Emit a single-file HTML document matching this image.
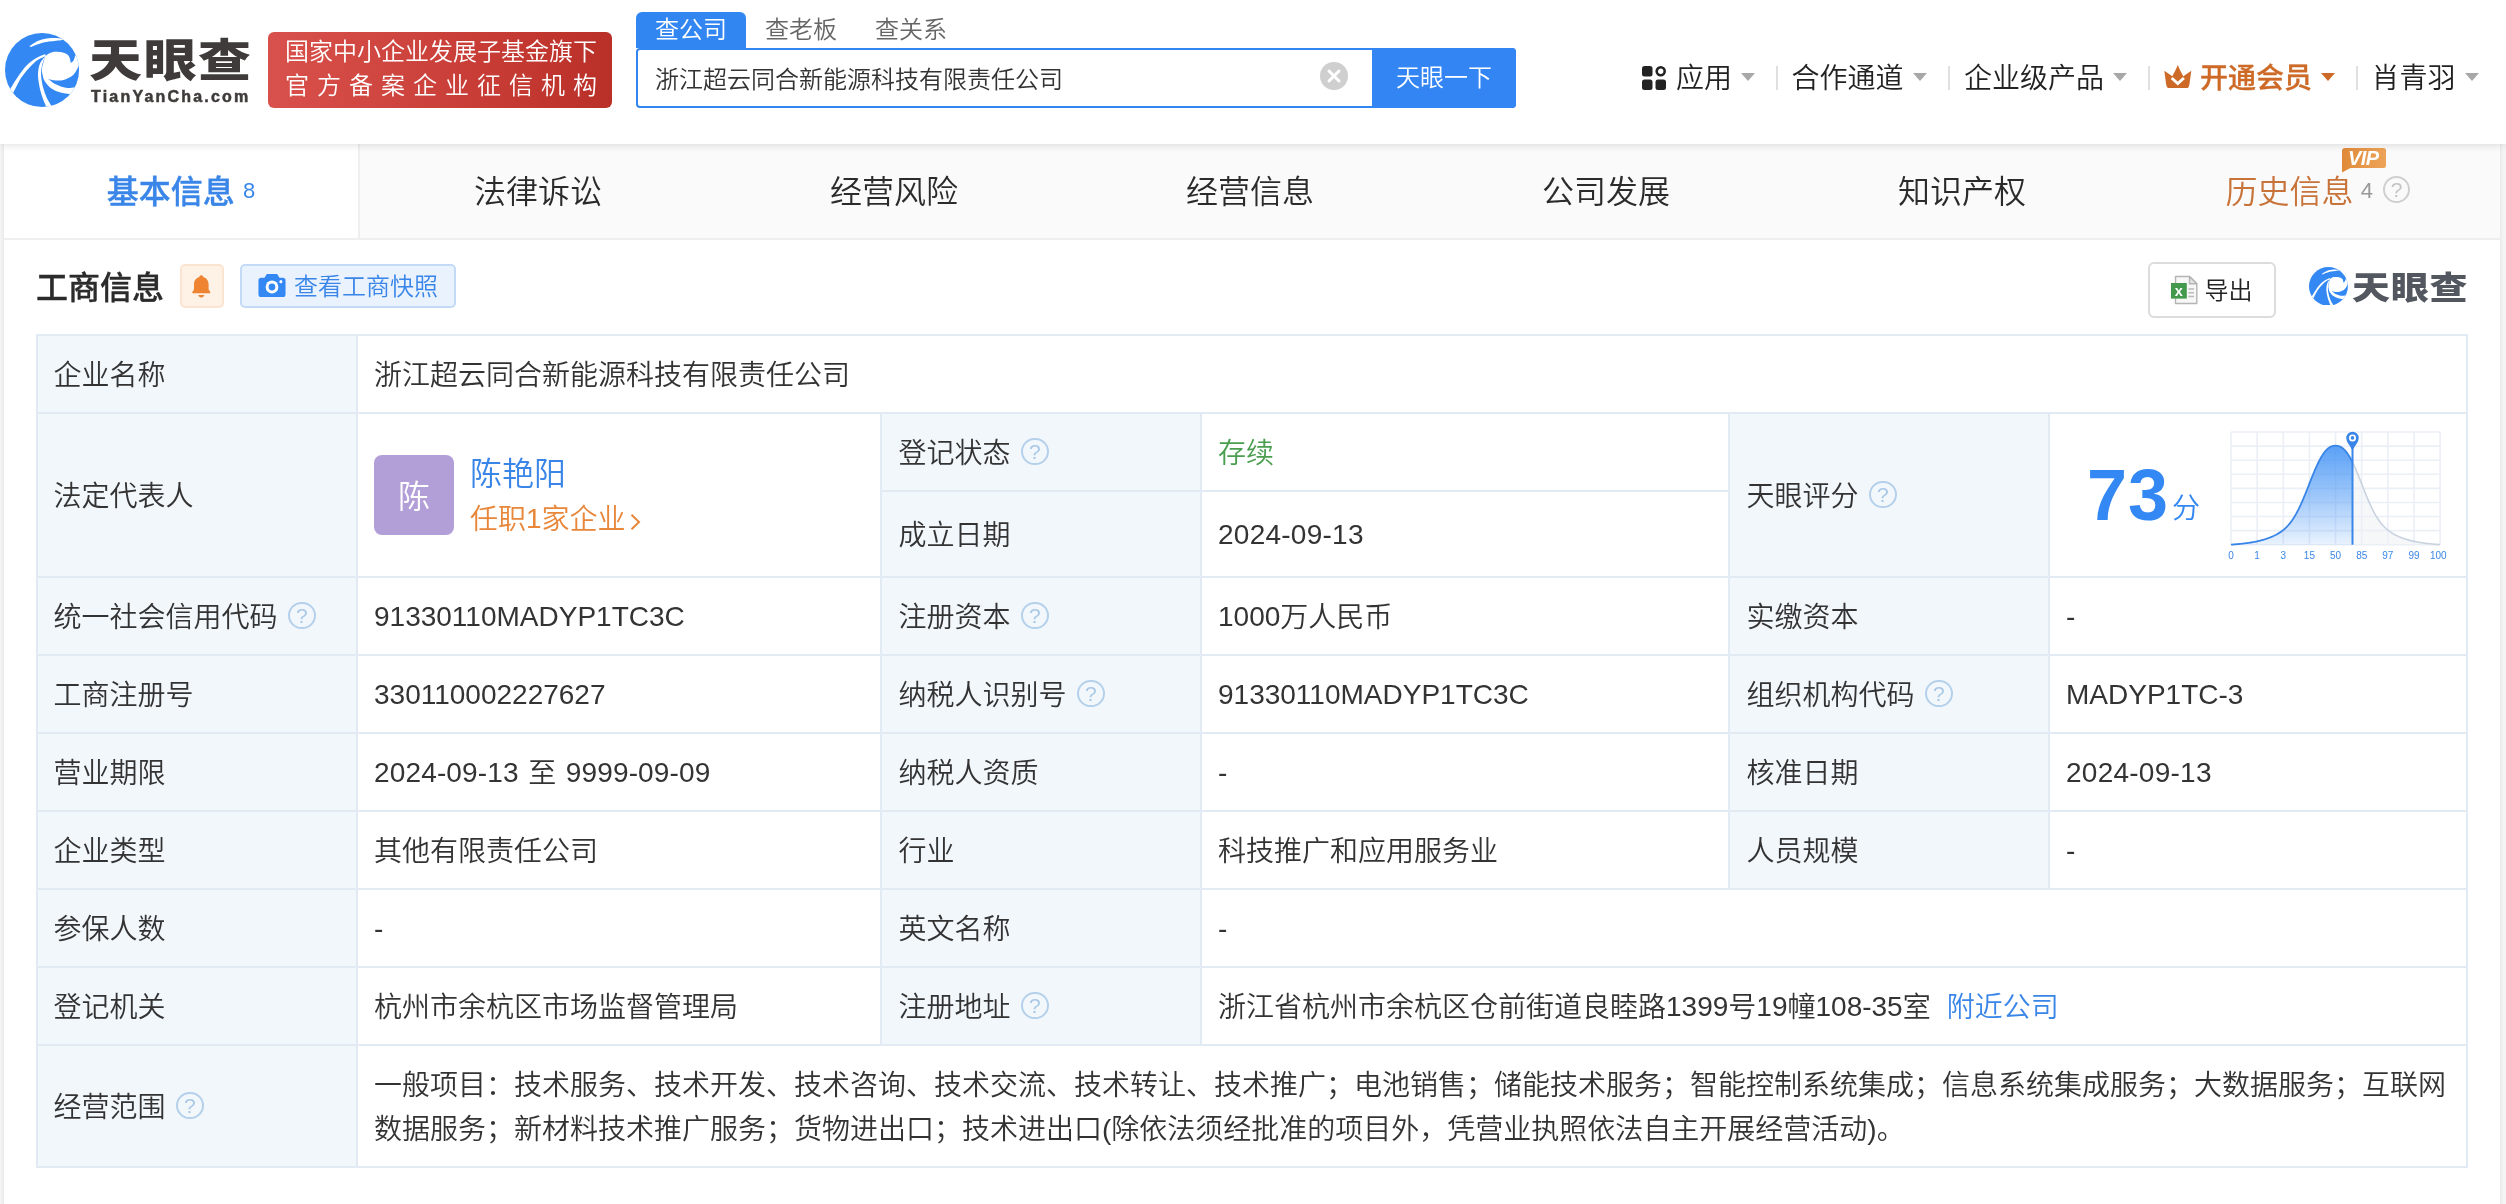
<!DOCTYPE html>
<html lang="zh-CN">
<head>
<meta charset="utf-8">
<title>天眼查 - 浙江超云同合新能源科技有限责任公司</title>
<style>
*{box-sizing:border-box;margin:0;padding:0}
html,body{width:2506px;height:1204px;overflow:hidden;background:#f5f5f5}
body{position:relative;font-family:"Liberation Sans","Noto Sans CJK SC",sans-serif;color:#333;font-size:28px;font-weight:350}
.abs{position:absolute}
#hdr,#main{will-change:transform}
/* header */
#hdr{position:absolute;left:0;top:0;width:2506px;height:144px;background:#fff;box-shadow:0 1px 8px rgba(0,0,0,.13);z-index:5}
#logo-txt{position:absolute;left:89px;top:20px;font-size:53px;line-height:72px;font-weight:900;color:#3f3b3a;letter-spacing:1.5px;white-space:nowrap;transform-origin:0 100%;transform:scaleY(.86)}
#logo-sub{position:absolute;left:91px;top:87px;font-size:16px;line-height:20px;font-weight:700;color:#3f3b3a;letter-spacing:2.2px;white-space:nowrap;-webkit-text-stroke:.5px #3f3b3a}
#banner{position:absolute;left:268px;top:32px;width:344px;height:76px;border-radius:6px;background:linear-gradient(90deg,#d9514c 0%,#c53a33 70%,#b93029 100%);color:#fff;font-size:24px;line-height:34px;padding:3px 0 0 17px;white-space:nowrap}
#banner .l2{letter-spacing:8px}
.stab{position:absolute;top:12px;height:36px;line-height:36px;font-size:24px;color:#666;white-space:nowrap}
#stab1{left:636px;width:110px;background:#3186f2;color:#fff;text-align:center;border-radius:6px 6px 0 0}
#sbox{position:absolute;left:636px;top:48px;width:880px;height:60px;border:2px solid #3186f2;border-radius:4px;background:#fff}
#sbox .q{position:absolute;left:17px;top:0;line-height:59px;font-size:24px;color:#333;white-space:nowrap}
#sbtn{position:absolute;left:1372px;top:48px;width:144px;height:60px;background:#3285f3;color:#fff;font-size:24px;line-height:59px;text-align:center;border-radius:0 4px 4px 0}
#sclr{position:absolute;left:1320px;top:62px;width:28px;height:28px}
.nav{position:absolute;top:59px;line-height:40px;font-size:28px;color:#222;white-space:nowrap}
.nav.vip{color:#cd6a27;font-weight:500;-webkit-text-stroke:.3px #cd6a27}
.tri{position:absolute;top:72.5px;width:0;height:0;border-left:7px solid transparent;border-right:7px solid transparent;border-top:8.5px solid #a8a8a8}
.tri.o{border-top-color:#cd6a27}
.sep{position:absolute;top:66px;width:2px;height:24px;background:#e0e0e3}
/* tabs */
#main{position:absolute;left:4px;top:144px;width:2496px;height:1064px;background:#fff;box-shadow:0 0 4px rgba(0,0,0,.10)}
#tabs{position:absolute;left:0;top:0;width:2496px;height:96px;background:#fafafa;border-bottom:2px solid #efefef}
.tab{position:absolute;top:0;height:94px;line-height:96px;font-size:32px;color:#2b2b2b;text-align:center;width:356px;white-space:nowrap}
.tab.on{background:#fff;color:#3a86e8;font-weight:500;-webkit-text-stroke:.35px #3a86e8;border-right:2px solid #efefef;width:356px}
.tab .n{font-size:22px;font-weight:400;margin-left:8px;position:relative;top:-5px;-webkit-text-stroke:0}

/* body */
#pg{position:absolute;left:-4px;top:-144px;width:2506px;height:1204px}
#pg>*{position:absolute}
#sec-title{left:36px;top:265.5px;line-height:44px;font-size:32px;font-weight:500;color:#2b2b2b;-webkit-text-stroke:.35px #2b2b2b;white-space:nowrap}
#bell{left:180px;top:264px;width:44px;height:44px;border:2px solid #fbe4d0;background:#fef1e6;border-radius:5px}
#bell svg{position:absolute;left:9px;top:7.5px}
#snap{left:240px;top:264px;width:216px;height:44px;border:2px solid #c4dbf8;background:#eaf2fd;border-radius:5px;color:#3a86e8;font-size:24px;line-height:39px;white-space:nowrap}
#snap svg{position:absolute;left:16px;top:6.5px}
#snap span{position:absolute;left:52px;top:1px}
#export{left:2148px;top:262px;width:128px;height:56px;border:2px solid #dcdcdc;border-radius:6px;background:#fff;color:#222;font-size:24px;line-height:51px;white-space:nowrap}
#export svg{position:absolute;left:20px;top:11px}
#export span{position:absolute;left:54.5px;top:1px}
#wm-txt{left:2352px;top:264px;letter-spacing:.7px;font-size:38px;line-height:48px;font-weight:900;color:#53575f;white-space:nowrap;transform-origin:0 50%;transform:scaleY(.84)}
.c{border:2px solid #e2eaf4;background:#fff;display:flex;align-items:center;padding:3.5px 14px 0 16px;font-weight:350;font-size:28px;line-height:44px;color:#333;white-space:nowrap}
.c.l{background:#f2f7fc;padding-left:15.5px;color:#333}
.c .t{display:flex;align-items:center}
.qm{display:inline-block;width:27.5px;height:27.5px;border:2px solid #b4d0ea;border-radius:50%;color:#a9c8e6;font-size:21px;line-height:24px;text-align:center;margin-left:10.5px;position:relative;top:-2.5px;font-weight:400;font-family:"Liberation Sans",sans-serif}
.lk{color:#3a86e8;margin-left:16px}
.c.scope{white-space:normal;align-items:flex-start;padding-top:17.5px;padding-right:10px;line-height:44.5px}
.c.scope .t{display:block}

.ava{position:absolute;left:16px;top:41px;width:80px;height:80px;border-radius:8px;background:#b39fd8;color:#fff;font-size:32px;line-height:84px;text-align:center}
.pn{position:absolute;left:112px;top:38px;font-size:32px;line-height:44px;color:#3a86e8}
.pj{position:absolute;left:112px;top:84px;font-size:28px;line-height:44px;color:#e8873a}
.pj svg{margin-left:4.5px;position:relative;top:2px}
.sc{position:absolute;left:37px;top:39px;font-size:72px;line-height:84px;font-weight:700;color:#3388f3;letter-spacing:1px}
.fen{position:absolute;left:122px;top:73px;font-size:28px;line-height:44px;color:#3388f3}

.qm.g{border-color:#cfcfcf;color:#c4c4c4;margin-left:10px;position:relative;top:-6.2px;font-size:21px;line-height:24px;font-weight:400}
.vipb{position:absolute;left:202px;top:3.8px;width:44px;height:25px}
.vipb svg{position:absolute;left:0;top:0}
.vipb b{position:absolute;left:6px;top:.5px;font-size:20px;line-height:20px;color:#fff;font-style:italic;font-weight:700;letter-spacing:-.6px;font-family:"Liberation Sans",sans-serif}
.c.l2{padding-left:16.5px}
.en{position:relative;top:-.6px}
</style>
</head>
<body>
<div id="hdr">
  <svg class="abs" style="left:5px;top:33px" width="74" height="74" viewBox="0 0 74 74"><defs><clipPath id="lc1"><circle cx="37" cy="37" r="37"/></clipPath></defs><circle cx="37" cy="37" r="37" fill="#3388f3"/><g clip-path="url(#lc1)"><path d="M40.3 23.0 C41.4 22.3 44.3 19.7 47.2 19.2 C50.0 18.6 54.8 18.9 57.5 19.5 C60.3 20.1 62.4 21.2 63.8 23.0 C65.1 24.7 65.5 28.7 65.8 29.9 C66.3 29.4 68.0 28.5 68.7 27.2 C69.5 26.0 69.9 23.4 70.1 22.6 L75.5 21.6 L75.5 61.7 L64.1 61.0 C62.7 60.8 58.4 60.5 55.5 59.6 C52.5 58.7 49.1 57.4 46.5 55.5 C43.8 53.5 41.2 50.7 39.6 47.9 C37.9 45.0 37.3 39.8 36.8 38.2 L37.1 34.0 Z" fill="#fff"/><path d="M74.1 32.3 C73.1 34.0 70.7 39.8 67.9 42.3 C65.1 44.8 60.9 46.4 57.5 47.2 C54.2 48.0 50.3 47.4 47.9 47.2 C45.4 46.9 43.8 46.0 43.0 45.8 C44.3 46.7 47.6 49.8 50.6 51.3 C53.6 52.8 57.9 54.3 61.0 54.8 C64.1 55.3 67.6 54.5 69.0 54.4 L75.5 54.8 L75.5 32.6 Z" fill="#3388f3"/><path d="M4.1 57.9 C5.6 55.6 9.7 48.5 12.6 44.3 C15.5 40.1 18.5 35.8 21.6 32.6 C24.7 29.4 28.1 27.0 31.3 25.0 C34.4 23.1 38.8 21.7 40.3 21.0 L40.6 23.3 C39.3 23.9 35.4 25.2 32.6 27.1 C29.9 29.0 27.1 31.7 24.3 34.7 C21.6 37.7 18.7 40.9 16.0 45.1 C13.4 49.2 9.7 57.2 8.4 59.6 L5.7 61.7 Z" fill="#fff"/><path d="M40.4 23.1 C39.4 24.5 36.0 28.1 34.7 31.3 C33.5 34.5 33.0 38.4 33.0 42.3 C33.0 46.2 34.0 51.1 34.7 54.8 C35.5 58.5 36.4 61.4 37.5 64.5 C38.5 67.5 40.4 71.7 40.9 73.1 L43.7 75.5 L46.3 72.6 C45.6 71.3 43.0 67.4 41.6 64.5 C40.3 61.5 39.1 58.2 38.2 54.8 C37.3 51.3 36.5 47.2 36.2 43.7 C36.0 40.3 36.0 37.5 36.7 34.0 C37.3 30.6 39.8 24.9 40.4 23.1 Z" fill="#fff"/><path d="M24.3 13.1 C26.0 12.2 30.3 8.8 34.0 7.4 C37.7 6.0 42.6 5.3 46.5 5.0 C50.4 4.7 55.7 5.4 57.5 5.5 L57.9 6.9 C56.0 7.1 50.0 7.8 46.5 8.3 C43.0 8.8 40.3 9.0 36.8 10.0 C33.3 10.9 27.6 13.4 25.7 14.1 Z" fill="#fff"/></g></svg>
  <div id="logo-txt">天眼查</div>
  <div id="logo-sub">TianYanCha.com</div>
  <div id="banner"><div>国家中小企业发展子基金旗下</div><div class="l2">官方备案企业征信机构</div></div>

  <div class="stab" id="stab1">查公司</div>
  <div class="stab" style="left:765px">查老板</div>
  <div class="stab" style="left:875px">查关系</div>
  <div id="sbox"><div class="q">浙江超云同合新能源科技有限责任公司</div></div>
  <svg id="sclr" viewBox="0 0 28 28"><circle cx="14" cy="14" r="14" fill="#cfcfcf"/><path d="M9 9 L19 19 M19 9 L9 19" stroke="#fff" stroke-width="3" stroke-linecap="round"/></svg>
  <div id="sbtn">天眼一下</div>

  <svg class="abs" style="left:1642px;top:66px" width="24" height="24" viewBox="0 0 24 24"><rect x="0" y="0" width="10.5" height="10.5" rx="2.5" fill="#222"/><rect x="0" y="13.5" width="10.5" height="10.5" rx="2.5" fill="#222"/><rect x="13.5" y="13.5" width="10.5" height="10.5" rx="2.5" fill="#222"/><circle cx="18.7" cy="5.3" r="4" fill="none" stroke="#222" stroke-width="2.6"/></svg>
  <div class="nav" style="left:1676px">应用</div><div class="tri" style="left:1741px"></div><div class="sep" style="left:1776px"></div>
  <div class="nav" style="left:1791.5px">合作通道</div><div class="tri" style="left:1913px"></div><div class="sep" style="left:1948px"></div>
  <div class="nav" style="left:1964px">企业级产品</div><div class="tri" style="left:2113px"></div><div class="sep" style="left:2148px"></div>
  <svg class="abs" style="left:2164.2px;top:64.6px" width="27.600" height="23.600" viewBox="0 0 27.600 23.600"><path d="M0.300 5.700 L8.300 11.200 C10.200 8 12.400 3.500 13.800 0 C15.200 3.500 17.400 8 19.300 11.200 L27.300 5.700 L25.400 19.600 Q24.900 23.600 21.200 23.600 L6.400 23.600 Q2.700 23.600 2.200 19.600 Z" fill="#cd6a27"/><path d="M7.700 13 L13.800 18.500 L19.900 13" fill="none" stroke="#fff" stroke-width="2.900" stroke-linejoin="miter"/></svg>
  <div class="nav vip" style="left:2200px">开通会员</div><div class="tri o" style="left:2321px"></div><div class="sep" style="left:2356px"></div>
  <div class="nav" style="left:2371.5px">肖青羽</div><div class="tri" style="left:2465px"></div>
</div>

<div id="main">
  <div id="tabs">
    <div class="tab on" style="left:0">基本信息<span class="n">8</span></div>
    <div class="tab" style="left:356px">法律诉讼</div>
    <div class="tab" style="left:712px">经营风险</div>
    <div class="tab" style="left:1068px">经营信息</div>
    <div class="tab" style="left:1424px">公司发展</div>
    <div class="tab" style="left:1780px">知识产权</div>
    <div class="tab" id="tab-his" style="left:2136px;color:#c8733a">历史信息<span class="n" style="color:#999;margin-left:7px">4</span><span class="qm g">?</span><span class="vipb"><svg width="44" height="25" viewBox="0 0 44 25"><defs><linearGradient id="vg" x1="0" y1="0" x2="1" y2="0"><stop offset="0" stop-color="#e08a3a"/><stop offset="1" stop-color="#eda458"/></linearGradient></defs><path d="M3 0 H41.500 Q44 0 44 2.500 V17.500 Q44 20 41.500 20 H8.500 L0 24.500 V3 Q0 0 3 0 Z" fill="url(#vg)"/></svg><b>VIP</b></span></div>
  </div>
  <div id="pg">
    <div id="sec-title">工商信息</div>
    <div id="bell"><svg width="20.6" height="24" viewBox="0 0 24 28"><path d="M12 1.500 C13.300 1.500 14.200 2.400 14.200 3.600 C18.200 4.600 20.500 8 20.500 12 L20.500 18 L22.500 21 Q23 22.500 21.500 22.500 L2.500 22.500 Q1 22.500 1.500 21 L3.500 18 L3.500 12 C3.500 8 5.800 4.600 9.800 3.600 C9.800 2.400 10.700 1.500 12 1.500 Z" fill="#ee8432"/><path d="M8.500 24.500 L15.500 24.500 C15.200 26.300 13.800 27.300 12 27.300 C10.200 27.300 8.800 26.300 8.500 24.500 Z" fill="#ee8432"/></svg></div>
    <div id="snap"><svg width="28" height="25" viewBox="0 0 30 26" preserveAspectRatio="none"><path d="M9.500 1 L20.500 1 L23 5 L26.500 5 Q29.500 5 29.500 8 L29.500 22 Q29.500 25 26.500 25 L3.500 25 Q0.500 25 0.500 22 L0.500 8 Q0.500 5 3.500 5 L7 5 Z" fill="#3388f3"/><circle cx="15" cy="14.500" r="6.800" fill="#fff"/><circle cx="15" cy="14.500" r="3.600" fill="#3388f3"/><circle cx="24.500" cy="9" r="1.600" fill="#fff"/></svg><span>查看工商快照</span></div>
    <div id="export"><svg width="28" height="30" viewBox="0 0 28 30"><path d="M5.500 1.500 L19.500 1.500 L26.800 8.800 L26.800 28.500 L5.500 28.500 Z" fill="#f7f7f7" stroke="#b4b4b4" stroke-width="1.400" stroke-linejoin="round"/><path d="M19.500 1.500 L19.500 8.800 L26.800 8.800 Z" fill="#e2e2e2" stroke="#b4b4b4" stroke-width="1.400" stroke-linejoin="round"/><path d="M18.500 14 H24 M18.500 17.700 H24 M18.500 21.400 H24" stroke="#b9b9b9" stroke-width="1.500"/><rect x="1" y="8" width="15.800" height="15.600" fill="#439a4c"/><text x="8.900" y="20.800" text-anchor="middle" font-family="Liberation Sans,sans-serif" font-weight="700" font-size="14.500" fill="#fff">x</text></svg><span>导出</span></div>
    <svg class="abs" style="left:2308.9px;top:266.7px" width="38.8" height="38.8" viewBox="0 0 74 74"><defs><clipPath id="lc2"><circle cx="37" cy="37" r="37"/></clipPath></defs><circle cx="37" cy="37" r="37" fill="#3388f3"/><g clip-path="url(#lc2)"><path d="M40.3 23.0 C41.4 22.3 44.3 19.7 47.2 19.2 C50.0 18.6 54.8 18.9 57.5 19.5 C60.3 20.1 62.4 21.2 63.8 23.0 C65.1 24.7 65.5 28.7 65.8 29.9 C66.3 29.4 68.0 28.5 68.7 27.2 C69.5 26.0 69.9 23.4 70.1 22.6 L75.5 21.6 L75.5 61.7 L64.1 61.0 C62.7 60.8 58.4 60.5 55.5 59.6 C52.5 58.7 49.1 57.4 46.5 55.5 C43.8 53.5 41.2 50.7 39.6 47.9 C37.9 45.0 37.3 39.8 36.8 38.2 L37.1 34.0 Z" fill="#fff"/><path d="M74.1 32.3 C73.1 34.0 70.7 39.8 67.9 42.3 C65.1 44.8 60.9 46.4 57.5 47.2 C54.2 48.0 50.3 47.4 47.9 47.2 C45.4 46.9 43.8 46.0 43.0 45.8 C44.3 46.7 47.6 49.8 50.6 51.3 C53.6 52.8 57.9 54.3 61.0 54.8 C64.1 55.3 67.6 54.5 69.0 54.4 L75.5 54.8 L75.5 32.6 Z" fill="#3388f3"/><path d="M4.1 57.9 C5.6 55.6 9.7 48.5 12.6 44.3 C15.5 40.1 18.5 35.8 21.6 32.6 C24.7 29.4 28.1 27.0 31.3 25.0 C34.4 23.1 38.8 21.7 40.3 21.0 L40.6 23.3 C39.3 23.9 35.4 25.2 32.6 27.1 C29.9 29.0 27.1 31.7 24.3 34.7 C21.6 37.7 18.7 40.9 16.0 45.1 C13.4 49.2 9.7 57.2 8.4 59.6 L5.7 61.7 Z" fill="#fff"/><path d="M40.4 23.1 C39.4 24.5 36.0 28.1 34.7 31.3 C33.5 34.5 33.0 38.4 33.0 42.3 C33.0 46.2 34.0 51.1 34.7 54.8 C35.5 58.5 36.4 61.4 37.5 64.5 C38.5 67.5 40.4 71.7 40.9 73.1 L43.7 75.5 L46.3 72.6 C45.6 71.3 43.0 67.4 41.6 64.5 C40.3 61.5 39.1 58.2 38.2 54.8 C37.3 51.3 36.5 47.2 36.2 43.7 C36.0 40.3 36.0 37.5 36.7 34.0 C37.3 30.6 39.8 24.9 40.4 23.1 Z" fill="#fff"/><path d="M24.3 13.1 C26.0 12.2 30.3 8.8 34.0 7.4 C37.7 6.0 42.6 5.3 46.5 5.0 C50.4 4.7 55.7 5.4 57.5 5.5 L57.9 6.9 C56.0 7.1 50.0 7.8 46.5 8.3 C43.0 8.8 40.3 9.0 36.8 10.0 C33.3 10.9 27.6 13.4 25.7 14.1 Z" fill="#fff"/></g></svg>
    <div id="wm-txt">天眼查</div>
<div class="c l" style="left:36px;top:334px;width:322px;height:80px;"><div class="t">企业名称</div></div>
<div class="c v" style="left:356px;top:334px;width:2112px;height:80px;"><div class="t">浙江超云同合新能源科技有限责任公司</div></div>
<div class="c l" style="left:36px;top:412px;width:322px;height:166px;"><div class="t">法定代表人</div></div>
<div class="c v" style="left:356px;top:412px;width:526px;height:166px;position:absolute"><div class="ava">陈</div><div class="pn">陈艳阳</div><div class="pj">任职<span class="en">1</span>家企业<svg width="11" height="18" viewBox="0 0 11 18"><path d="M1.500 1.800 L9 9 L1.500 16.200" fill="none" stroke="#e8873a" stroke-width="2"/></svg></div></div>
<div class="c l l2" style="left:880px;top:412px;width:322px;height:80px;"><div class="t">登记状态<span class="qm">?</span></div></div>
<div class="c v" style="left:1200px;top:412px;width:530px;height:80px;"><div class="t"><span style="color:#4b9e4f">存续</span></div></div>
<div class="c l l2" style="left:880px;top:490px;width:322px;height:88px;"><div class="t">成立日期</div></div>
<div class="c v" style="left:1200px;top:490px;width:530px;height:88px;"><div class="t"><span class="en" style="letter-spacing:.25px">2024-09-13</span></div></div>
<div class="c l l2" style="left:1728px;top:412px;width:322px;height:166px;"><div class="t">天眼评分<span class="qm">?</span></div></div>
<div class="c v" style="left:2048px;top:412px;width:420px;height:166px;"><div class="sc">73</div><div class="fen">分</div><svg class="chart" style="position:absolute;left:166.5px;top:3.5px" width="237.1" height="154.7" viewBox="-14 -14 237.1 154.7"><defs><linearGradient id="cg" x1="0" y1="0" x2="0" y2="1"><stop offset="0" stop-color="#4c98f5" stop-opacity="0.92"/><stop offset="0.5" stop-color="#4c98f5" stop-opacity="0.55"/><stop offset="1" stop-color="#4c98f5" stop-opacity="0.12"/></linearGradient></defs><path d="M121.5 30.23 L122.0 31.25 L123.0 33.37 L124.0 35.58 L125.0 37.87 L126.0 40.23 L127.0 42.65 L128.0 45.12 L129.0 47.63 L130.0 50.16 L131.0 52.71 L132.0 55.25 L133.0 57.79 L134.0 60.30 L135.0 62.77 L136.0 65.20 L137.0 67.58 L138.0 69.89 L139.0 72.14 L140.0 74.30 L141.0 76.39 L142.0 78.39 L143.0 80.30 L144.0 82.12 L145.0 83.85 L146.0 85.48 L147.0 87.03 L148.0 88.49 L149.0 89.86 L150.0 91.15 L151.0 92.37 L152.0 93.50 L153.0 94.57 L154.0 95.57 L155.0 96.50 L156.0 97.38 L157.0 98.20 L158.0 98.98 L159.0 99.70 L160.0 100.39 L161.0 101.03 L162.0 101.64 L163.0 102.22 L164.0 102.77 L165.0 103.28 L166.0 103.78 L167.0 104.24 L168.0 104.69 L169.0 105.11 L170.0 105.51 L171.0 105.90 L172.0 106.27 L173.0 106.62 L174.0 106.95 L175.0 107.27 L176.0 107.58 L177.0 107.87 L178.0 108.15 L179.0 108.42 L180.0 108.67 L181.0 108.91 L182.0 109.15 L183.0 109.37 L184.0 109.58 L185.0 109.78 L186.0 109.98 L187.0 110.16 L188.0 110.34 L189.0 110.51 L190.0 110.67 L191.0 110.82 L192.0 110.97 L193.0 111.10 L194.0 111.24 L195.0 111.36 L196.0 111.49 L197.0 111.60 L198.0 111.71 L199.0 111.81 L200.0 111.91 L201.0 112.01 L202.0 112.10 L203.0 112.19 L204.0 112.27 L205.0 112.35 L206.0 112.42 L207.0 112.49 L208.0 112.56 L209.0 112.62 L209.1 112.63 L209.1 112.7 L121.5 112.7 Z" fill="#f6f7f9"/><path d="M0.00 0 V112.7 M26.14 0 V112.7 M52.27 0 V112.7 M78.41 0 V112.7 M104.55 0 V112.7 M130.69 0 V112.7 M156.82 0 V112.7 M182.96 0 V112.7 M209.10 0 V112.7 M0 0.00 H209.1 M0 14.09 H209.1 M0 28.18 H209.1 M0 42.26 H209.1 M0 56.35 H209.1 M0 70.44 H209.1 M0 84.53 H209.1 M0 98.61 H209.1 M0 112.70 H209.1" stroke="#ebeff6" stroke-width="1.6" fill="none"/><path d="M0.0 112.62 L1.0 112.56 L2.0 112.49 L3.0 112.42 L4.0 112.35 L5.0 112.27 L6.0 112.19 L7.0 112.10 L8.0 112.01 L9.0 111.91 L10.0 111.81 L11.0 111.71 L12.0 111.60 L13.0 111.49 L14.0 111.36 L15.0 111.24 L16.0 111.10 L17.0 110.97 L18.0 110.82 L19.0 110.67 L20.0 110.51 L21.0 110.34 L22.0 110.16 L23.0 109.98 L24.0 109.78 L25.0 109.58 L26.0 109.37 L27.0 109.15 L28.0 108.91 L29.0 108.67 L30.0 108.42 L31.0 108.15 L32.0 107.87 L33.0 107.58 L34.0 107.27 L35.0 106.95 L36.0 106.62 L37.0 106.27 L38.0 105.90 L39.0 105.51 L40.0 105.11 L41.0 104.69 L42.0 104.24 L43.0 103.78 L44.0 103.28 L45.0 102.77 L46.0 102.22 L47.0 101.64 L48.0 101.03 L49.0 100.39 L50.0 99.70 L51.0 98.98 L52.0 98.20 L53.0 97.38 L54.0 96.50 L55.0 95.57 L56.0 94.57 L57.0 93.50 L58.0 92.37 L59.0 91.15 L60.0 89.86 L61.0 88.49 L62.0 87.03 L63.0 85.48 L64.0 83.85 L65.0 82.12 L66.0 80.30 L67.0 78.39 L68.0 76.39 L69.0 74.30 L70.0 72.14 L71.0 69.89 L72.0 67.58 L73.0 65.20 L74.0 62.77 L75.0 60.30 L76.0 57.79 L77.0 55.25 L78.0 52.71 L79.0 50.16 L80.0 47.63 L81.0 45.12 L82.0 42.65 L83.0 40.23 L84.0 37.87 L85.0 35.58 L86.0 33.37 L87.0 31.25 L88.0 29.24 L89.0 27.33 L90.0 25.54 L91.0 23.86 L92.0 22.32 L93.0 20.90 L94.0 19.61 L95.0 18.46 L96.0 17.44 L97.0 16.55 L98.0 15.79 L99.0 15.16 L100.0 14.65 L101.0 14.25 L102.0 13.97 L103.0 13.79 L104.0 13.71 L105.0 13.71 L106.0 13.79 L107.0 13.97 L108.0 14.25 L109.0 14.65 L110.0 15.16 L111.0 15.79 L112.0 16.55 L113.0 17.44 L114.0 18.46 L115.0 19.61 L116.0 20.90 L117.0 22.32 L118.0 23.86 L119.0 25.54 L120.0 27.33 L121.0 29.24 L121.5 30.23 L121.5 112.7 L0 112.7 Z" fill="url(#cg)"/><path d="M121.5 30.23 L122.0 31.25 L123.0 33.37 L124.0 35.58 L125.0 37.87 L126.0 40.23 L127.0 42.65 L128.0 45.12 L129.0 47.63 L130.0 50.16 L131.0 52.71 L132.0 55.25 L133.0 57.79 L134.0 60.30 L135.0 62.77 L136.0 65.20 L137.0 67.58 L138.0 69.89 L139.0 72.14 L140.0 74.30 L141.0 76.39 L142.0 78.39 L143.0 80.30 L144.0 82.12 L145.0 83.85 L146.0 85.48 L147.0 87.03 L148.0 88.49 L149.0 89.86 L150.0 91.15 L151.0 92.37 L152.0 93.50 L153.0 94.57 L154.0 95.57 L155.0 96.50 L156.0 97.38 L157.0 98.20 L158.0 98.98 L159.0 99.70 L160.0 100.39 L161.0 101.03 L162.0 101.64 L163.0 102.22 L164.0 102.77 L165.0 103.28 L166.0 103.78 L167.0 104.24 L168.0 104.69 L169.0 105.11 L170.0 105.51 L171.0 105.90 L172.0 106.27 L173.0 106.62 L174.0 106.95 L175.0 107.27 L176.0 107.58 L177.0 107.87 L178.0 108.15 L179.0 108.42 L180.0 108.67 L181.0 108.91 L182.0 109.15 L183.0 109.37 L184.0 109.58 L185.0 109.78 L186.0 109.98 L187.0 110.16 L188.0 110.34 L189.0 110.51 L190.0 110.67 L191.0 110.82 L192.0 110.97 L193.0 111.10 L194.0 111.24 L195.0 111.36 L196.0 111.49 L197.0 111.60 L198.0 111.71 L199.0 111.81 L200.0 111.91 L201.0 112.01 L202.0 112.10 L203.0 112.19 L204.0 112.27 L205.0 112.35 L206.0 112.42 L207.0 112.49 L208.0 112.56 L209.0 112.62 L209.1 112.63" fill="none" stroke="#c9d3df" stroke-width="1.6"/><path d="M0.0 112.62 L1.0 112.56 L2.0 112.49 L3.0 112.42 L4.0 112.35 L5.0 112.27 L6.0 112.19 L7.0 112.10 L8.0 112.01 L9.0 111.91 L10.0 111.81 L11.0 111.71 L12.0 111.60 L13.0 111.49 L14.0 111.36 L15.0 111.24 L16.0 111.10 L17.0 110.97 L18.0 110.82 L19.0 110.67 L20.0 110.51 L21.0 110.34 L22.0 110.16 L23.0 109.98 L24.0 109.78 L25.0 109.58 L26.0 109.37 L27.0 109.15 L28.0 108.91 L29.0 108.67 L30.0 108.42 L31.0 108.15 L32.0 107.87 L33.0 107.58 L34.0 107.27 L35.0 106.95 L36.0 106.62 L37.0 106.27 L38.0 105.90 L39.0 105.51 L40.0 105.11 L41.0 104.69 L42.0 104.24 L43.0 103.78 L44.0 103.28 L45.0 102.77 L46.0 102.22 L47.0 101.64 L48.0 101.03 L49.0 100.39 L50.0 99.70 L51.0 98.98 L52.0 98.20 L53.0 97.38 L54.0 96.50 L55.0 95.57 L56.0 94.57 L57.0 93.50 L58.0 92.37 L59.0 91.15 L60.0 89.86 L61.0 88.49 L62.0 87.03 L63.0 85.48 L64.0 83.85 L65.0 82.12 L66.0 80.30 L67.0 78.39 L68.0 76.39 L69.0 74.30 L70.0 72.14 L71.0 69.89 L72.0 67.58 L73.0 65.20 L74.0 62.77 L75.0 60.30 L76.0 57.79 L77.0 55.25 L78.0 52.71 L79.0 50.16 L80.0 47.63 L81.0 45.12 L82.0 42.65 L83.0 40.23 L84.0 37.87 L85.0 35.58 L86.0 33.37 L87.0 31.25 L88.0 29.24 L89.0 27.33 L90.0 25.54 L91.0 23.86 L92.0 22.32 L93.0 20.90 L94.0 19.61 L95.0 18.46 L96.0 17.44 L97.0 16.55 L98.0 15.79 L99.0 15.16 L100.0 14.65 L101.0 14.25 L102.0 13.97 L103.0 13.79 L104.0 13.71 L105.0 13.71 L106.0 13.79 L107.0 13.97 L108.0 14.25 L109.0 14.65 L110.0 15.16 L111.0 15.79 L112.0 16.55 L113.0 17.44 L114.0 18.46 L115.0 19.61 L116.0 20.90 L117.0 22.32 L118.0 23.86 L119.0 25.54 L120.0 27.33 L121.0 29.24 L121.5 30.23" fill="none" stroke="#3a86e8" stroke-width="1.8"/><path d="M121.5 12 V112.7" stroke="#3a86e8" stroke-width="2"/><path d="M121.5 19 C120.0 14 115.3 11 115.3 5.9 A6.2 6.2 0 1 1 127.7 5.9 C127.7 11 123.0 14 121.5 19 Z" fill="#3a86e8"/><circle cx="121.5" cy="5.9" r="3.500" fill="#fff"/><circle cx="121.5" cy="5.9" r="1.800" fill="#3a86e8"/><text x="0.0" y="127.2" text-anchor="middle" font-size="10" fill="#3a86e8" font-family="Liberation Sans,sans-serif">0</text><text x="26.1" y="127.2" text-anchor="middle" font-size="10" fill="#3a86e8" font-family="Liberation Sans,sans-serif">1</text><text x="52.3" y="127.2" text-anchor="middle" font-size="10" fill="#3a86e8" font-family="Liberation Sans,sans-serif">3</text><text x="78.4" y="127.2" text-anchor="middle" font-size="10" fill="#3a86e8" font-family="Liberation Sans,sans-serif">15</text><text x="104.5" y="127.2" text-anchor="middle" font-size="10" fill="#3a86e8" font-family="Liberation Sans,sans-serif">50</text><text x="130.7" y="127.2" text-anchor="middle" font-size="10" fill="#3a86e8" font-family="Liberation Sans,sans-serif">85</text><text x="156.8" y="127.2" text-anchor="middle" font-size="10" fill="#3a86e8" font-family="Liberation Sans,sans-serif">97</text><text x="183.0" y="127.2" text-anchor="middle" font-size="10" fill="#3a86e8" font-family="Liberation Sans,sans-serif">99</text><text x="207.3" y="127.2" text-anchor="middle" font-size="10" fill="#3a86e8" font-family="Liberation Sans,sans-serif">100</text></svg></div>
<div class="c l" style="left:36px;top:576px;width:322px;height:80px;"><div class="t">统一社会信用代码<span class="qm">?</span></div></div>
<div class="c v" style="left:356px;top:576px;width:526px;height:80px;"><div class="t"><span class="en">91330110MADYP1TC3C</span></div></div>
<div class="c l l2" style="left:880px;top:576px;width:322px;height:80px;"><div class="t">注册资本<span class="qm">?</span></div></div>
<div class="c v" style="left:1200px;top:576px;width:530px;height:80px;"><div class="t"><span class="en">1000</span>万人民币</div></div>
<div class="c l l2" style="left:1728px;top:576px;width:322px;height:80px;"><div class="t">实缴资本</div></div>
<div class="c v" style="left:2048px;top:576px;width:420px;height:80px;"><div class="t"><span class="en">-</span></div></div>
<div class="c l" style="left:36px;top:654px;width:322px;height:80px;"><div class="t">工商注册号</div></div>
<div class="c v" style="left:356px;top:654px;width:526px;height:80px;"><div class="t"><span class="en">330110002227627</span></div></div>
<div class="c l l2" style="left:880px;top:654px;width:322px;height:80px;"><div class="t">纳税人识别号<span class="qm">?</span></div></div>
<div class="c v" style="left:1200px;top:654px;width:530px;height:80px;"><div class="t"><span class="en">91330110MADYP1TC3C</span></div></div>
<div class="c l l2" style="left:1728px;top:654px;width:322px;height:80px;"><div class="t">组织机构代码<span class="qm">?</span></div></div>
<div class="c v" style="left:2048px;top:654px;width:420px;height:80px;"><div class="t"><span class="en">MADYP1TC-3</span></div></div>
<div class="c l" style="left:36px;top:732px;width:322px;height:80px;"><div class="t">营业期限</div></div>
<div class="c v" style="left:356px;top:732px;width:526px;height:80px;"><div class="t" style="display:block;letter-spacing:.15px;word-spacing:1.5px"><span class="en">2024-09-13</span> 至 <span class="en">9999-09-09</span></div></div>
<div class="c l l2" style="left:880px;top:732px;width:322px;height:80px;"><div class="t">纳税人资质</div></div>
<div class="c v" style="left:1200px;top:732px;width:530px;height:80px;"><div class="t"><span class="en">-</span></div></div>
<div class="c l l2" style="left:1728px;top:732px;width:322px;height:80px;"><div class="t">核准日期</div></div>
<div class="c v" style="left:2048px;top:732px;width:420px;height:80px;"><div class="t"><span class="en" style="letter-spacing:.25px">2024-09-13</span></div></div>
<div class="c l" style="left:36px;top:810px;width:322px;height:80px;"><div class="t">企业类型</div></div>
<div class="c v" style="left:356px;top:810px;width:526px;height:80px;"><div class="t">其他有限责任公司</div></div>
<div class="c l l2" style="left:880px;top:810px;width:322px;height:80px;"><div class="t">行业</div></div>
<div class="c v" style="left:1200px;top:810px;width:530px;height:80px;"><div class="t">科技推广和应用服务业</div></div>
<div class="c l l2" style="left:1728px;top:810px;width:322px;height:80px;"><div class="t">人员规模</div></div>
<div class="c v" style="left:2048px;top:810px;width:420px;height:80px;"><div class="t"><span class="en">-</span></div></div>
<div class="c l" style="left:36px;top:888px;width:322px;height:80px;"><div class="t">参保人数</div></div>
<div class="c v" style="left:356px;top:888px;width:526px;height:80px;"><div class="t"><span class="en">-</span></div></div>
<div class="c l l2" style="left:880px;top:888px;width:322px;height:80px;"><div class="t">英文名称</div></div>
<div class="c v" style="left:1200px;top:888px;width:1268px;height:80px;"><div class="t"><span class="en">-</span></div></div>
<div class="c l" style="left:36px;top:966px;width:322px;height:80px;"><div class="t">登记机关</div></div>
<div class="c v" style="left:356px;top:966px;width:526px;height:80px;"><div class="t">杭州市余杭区市场监督管理局</div></div>
<div class="c l l2" style="left:880px;top:966px;width:322px;height:80px;"><div class="t">注册地址<span class="qm">?</span></div></div>
<div class="c v" style="left:1200px;top:966px;width:1268px;height:80px;"><div class="t">浙江省杭州市余杭区仓前街道良睦路<span class="en">1399</span>号<span class="en">19</span>幢<span class="en">108-35</span>室<span class="lk">附近公司</span></div></div>
<div class="c l" style="left:36px;top:1044px;width:322px;height:124px;"><div class="t">经营范围<span class="qm">?</span></div></div>
<div class="c v scope" style="left:356px;top:1044px;width:2112px;height:124px;"><div class="t">一般项目：技术服务、技术开发、技术咨询、技术交流、技术转让、技术推广；电池销售；储能技术服务；智能控制系统集成；信息系统集成服务；大数据服务；互联网数据服务；新材料技术推广服务；货物进出口；技术进出口(除依法须经批准的项目外，凭营业执照依法自主开展经营活动)。</div></div>
  </div>

</div>
</body>
</html>
